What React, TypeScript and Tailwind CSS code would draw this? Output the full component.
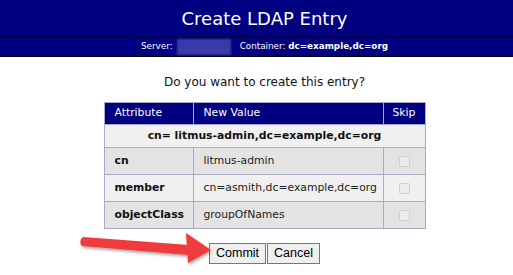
import React from "react";

const rows = [
  { attr: "cn", value: "litmus-admin", bg: "bg-[#e3e3e3]" },
  { attr: "member", value: "cn=asmith,dc=example,dc=org", bg: "bg-[#f0f0f0]" },
  { attr: "objectClass", value: "groupOfNames", bg: "bg-[#e3e3e3]" },
];

export default function App() {
  return (
    <div className="w-[513px] h-[275px] bg-white overflow-hidden relative" style={{ fontFamily: '"DejaVu Sans", Verdana, sans-serif' }}>
      <div className="bg-[#000080] h-[37px] flex items-center justify-center pl-[16px] text-white text-[18px] border-b border-[#00004a]">
        Create LDAP Entry
      </div>
      <div className="bg-[#000080] h-[20px] flex items-center justify-center pl-[16px] text-white text-[8.8px] border-t border-[#00006a] border-b border-b-black">
        <span>Server:</span>
        <span className="inline-block w-[54px] h-[16px] bg-[#3a3aa8] ml-[4px] mr-[9px] blur-[1px]"></span>
        <span>Container: <b>dc=example,dc=org</b></span>
      </div>
      <div className="text-center text-[12px] text-[#111] mt-[16px] pl-[16px]">Do you want to create this entry?</div>
      <div className="flex justify-center mt-[11px] pl-[16px]">
        <table className="border-collapse border border-[#a9a9cc] text-[10.8px] w-[322px] table-fixed">
          <colgroup>
            <col className="w-[89px]" />
            <col />
            <col className="w-[42px]" />
          </colgroup>
          <thead>
            <tr className="bg-[#000080] text-white h-[22px]">
              <th className="font-normal text-left pl-[10px] border border-[#a9a9cc]">Attribute</th>
              <th className="font-normal text-left pl-[10px] border border-[#a9a9cc]">New Value</th>
              <th className="font-normal text-center border border-[#a9a9cc]">Skip</th>
            </tr>
          </thead>
          <tbody>
            <tr className="bg-[#f0f0f0] h-[23px]">
              <td colSpan={3} className="text-center font-bold border border-[#a9a9cc] text-[#111]">cn= litmus-admin,dc=example,dc=org</td>
            </tr>
            {rows.map((r) => (
              <tr key={r.attr} className={`${r.bg} h-[27px]`}>
                <td className="font-bold pl-[10px] border border-[#a9a9cc] text-[#111]">{r.attr}</td>
                <td className="pl-[10px] border border-[#a9a9cc] text-[#222] whitespace-nowrap">{r.value}</td>
                <td className="border border-[#a9a9cc]">
                  <div className="mx-auto w-[11px] h-[11px] rounded-[2px] border border-[#d0d0d0] bg-[#ececec]"></div>
                </td>
              </tr>
            ))}
          </tbody>
        </table>
      </div>
      <div className="flex justify-center mt-[14px] pl-[16px]" style={{ fontFamily: '"Liberation Sans", Arial, sans-serif' }}>
        <button className="h-[21px] px-[6px] text-[12.5px] text-black bg-[#efefef] border border-[#767676]">Commit</button>
        <button className="h-[21px] px-[6px] text-[12.5px] text-black bg-[#efefef] border border-[#767676] ml-[1px]">Cancel</button>
      </div>
      <svg className="absolute left-[76px] top-[228px]" width="142" height="42" viewBox="0 0 142 42">
        <defs>
          <filter id="sh" x="-10%" y="-30%" width="130%" height="170%">
            <feDropShadow dx="1" dy="2" stdDeviation="1.5" floodColor="#000" floodOpacity="0.35" />
          </filter>
        </defs>
        <g filter="url(#sh)" fill="#ef3a3a">
          <path d="M7 9 L113 17 L112 27 L6 18 Q2 13 7 9 Z" />
          <path d="M110 5 L135 22 L112 35 Z" />
        </g>
      </svg>
    </div>
  );
}
